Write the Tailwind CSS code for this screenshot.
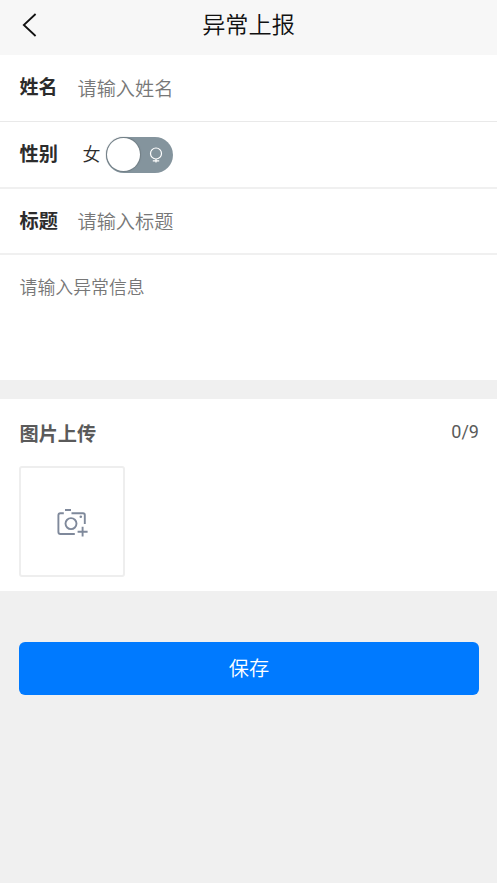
<!DOCTYPE html>
<html lang="zh-CN">
<head>
<meta charset="utf-8">
<meta name="viewport" content="width=device-width, initial-scale=1">
<title>异常上报</title>
<script src="https://cdn.jsdelivr.net/npm/@tailwindcss/browser@4"></script>
</head>
<body class="min-h-screen bg-[#f0f0f0] font-['Roboto','Noto_Sans_CJK_SC',sans-serif] text-[#2c2c2c]">
<header class="grid h-[55px] grid-cols-[60px_1fr_60px] items-center bg-[#f7f7f7] pb-[6px]">
  <button aria-label="返回" class="pl-[21px]">
    <svg class="block" width="18" height="26" viewBox="0 0 18 26" fill="none" stroke="#111" stroke-width="1.8"><path d="M14.6 2 2.8 13 14.6 24"/></svg>
  </button>
  <h1 class="pt-px text-center text-[23.2px] font-[350] leading-[46px] text-[#111]">异常上报</h1>
</header>
<main>
  <section class="bg-white">
    <label class="flex h-[67px] items-center border-b border-[#e9e9e9] pl-[19.5px]">
      <span class="w-[58px] pt-px text-[19px] font-bold">姓名</span>
      <span class="pt-[5px] text-[19.2px] font-[350] text-[#777]">请输入姓名</span>
    </label>
    <div class="flex h-[67px] items-center border-b-2 border-[#f0f0f0] pl-[19.5px]">
      <span class="w-[63px] pt-[2px] text-[19.2px] font-bold">性别</span>
      <span class="w-[23.5px] pb-px text-[18px] font-[350]">女</span>
      <span class="flex h-9 w-[66.5px] items-center justify-between rounded-full bg-[#84949d] pr-[10px] pl-px">
        <span class="size-[33px] rounded-full bg-white shadow-[0_0_1px_1px_#707d84]"></span>
        <svg width="14" height="16" viewBox="0 0 14 16" fill="none" stroke="#fff" stroke-width="1.2"><circle cx="7" cy="6.5" r="5.5"/><path d="M7 12V15.6M3.8 13.8H10.2"/></svg>
      </span>
    </div>
    <label class="flex h-[66px] items-center border-b-2 border-[#f0f0f0] pl-[19.5px]">
      <span class="w-[58px] pt-[2px] text-[19.2px] font-bold">标题</span>
      <span class="pt-[4px] text-[19.2px] font-[350] text-[#777]">请输入标题</span>
    </label>
    <div class="h-[125px] px-[19.5px] pt-[19px] text-[17.9px] font-[350] leading-[28px] text-[#777]">请输入异常信息</div>
  </section>
  <section class="mt-[19px] h-[192px] bg-white pr-[18px] pl-[19px] pt-[18px]">
    <div class="flex h-[30px] items-center justify-between text-[#5a5a5a]">
      <h2 class="pt-[6px] pl-[0.5px] text-[19.2px] font-bold">图片上传</h2>
      <span class="pb-px text-[18px]">0/9</span>
    </div>
    <button aria-label="上传图片" class="mt-[19px] flex h-[111px] w-[106px] items-center justify-center rounded-[3px] border-2 border-[#eee] pt-[2px] pl-[2px]">
      <svg width="32" height="30" viewBox="57 508 32 30" fill="none" stroke="#7f899b" stroke-width="1.9">
        <path d="M65 510H71M63.8 513.2H60.4Q58.4 513.2 58.4 515.2V532Q58.4 534 60.4 534H74.8M71.5 513.2H83Q84.8 513.2 84.8 515V524M82.6 526.7V536.5M77.6 531.7H87.6"/>
        <circle cx="71" cy="523.6" r="5.5"/><circle cx="80.8" cy="516.8" r="1.3" fill="#7f899b" stroke="none"/>
      </svg>
    </button>
  </section>
  <div class="pt-[51px] pr-[18px] pl-[19px]">
    <button class="h-[53px] w-full rounded-[6px] bg-[#007aff] pt-px text-[20.2px] font-[350] text-white">保存</button>
  </div>
</main>
</body>
</html>
